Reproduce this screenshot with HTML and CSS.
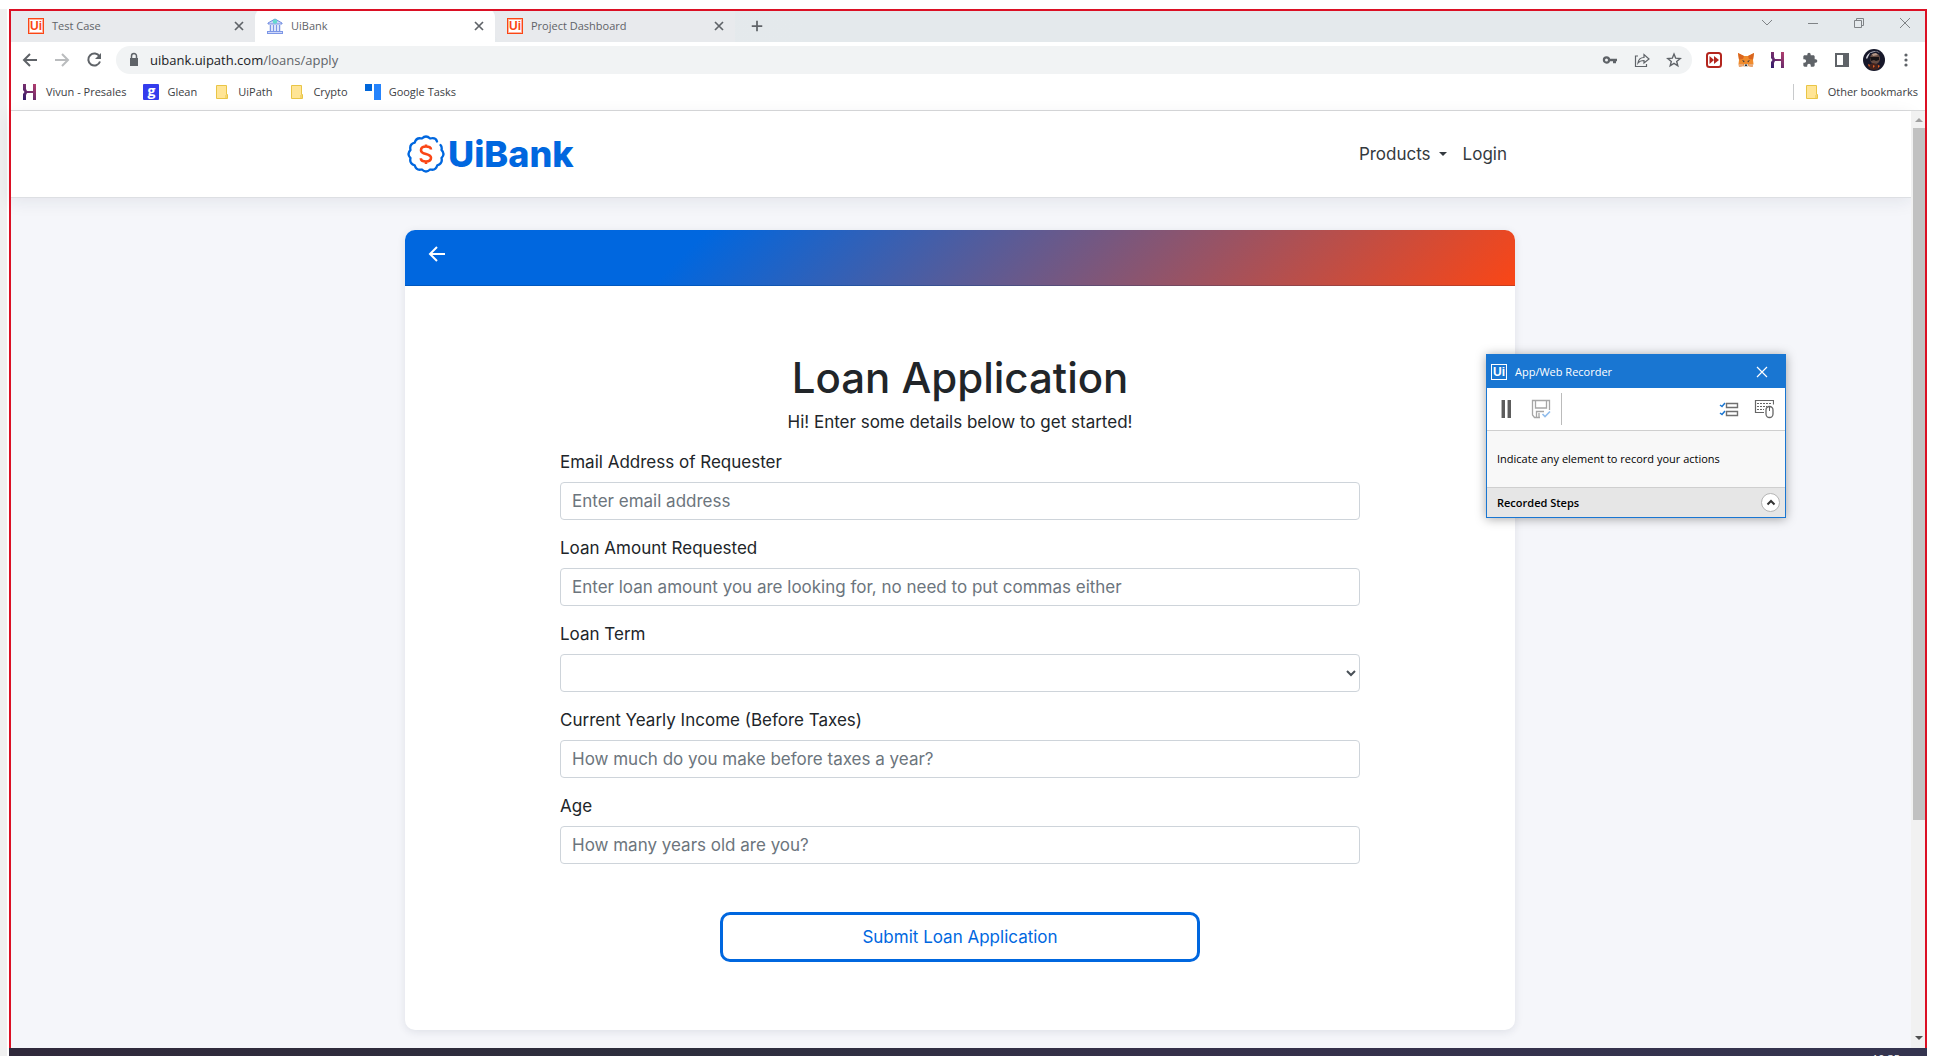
FILE: index.html
```html
<!DOCTYPE html>
<html lang="en">
<head>
<meta charset="utf-8">
<title>UiBank</title>
<link rel="stylesheet" href="styles.css">
</head>
<body>
<svg class="defs" aria-hidden="true">
  <defs>
    <linearGradient id="vivun" x1="0" y1="1" x2="1" y2="0"><stop offset="0" stop-color="#2b1a6b"/><stop offset="1" stop-color="#b8406e"/></linearGradient>
    <symbol id="i-vivun" viewBox="0 0 16 16"><path fill="url(#vivun)" d="M1 0h3v5l1 2h6V0h3v16h-3V9H5l-1 2v5H1v-6l1.500-2L1 6z"/></symbol>
    <symbol id="i-close" viewBox="0 0 16 16"><path d="M4 4l8 8M12 4l-8 8" fill="none" stroke="#5f6368" stroke-width="1.700"/></symbol>
    <symbol id="i-folder" viewBox="0 0 16 16"><path d="M2.500 1.500h10v9h1v4h-11z" fill="#ffe596" stroke="#e9c546"/><path d="M12 11v3" stroke="#e9c546" fill="none"/></symbol>
  </defs>
</svg>
<div class="window">
  <header class="chrome">
    <div class="tabs">
      <div class="tab"><span class="ui-badge">Ui</span><span class="tab-title">Test Case</span><button class="icon-btn" aria-label="Close tab"><svg><use href="#i-close"/></svg></button></div>
      <div class="tab tab-active">
        <svg viewBox="0 0 16 16"><path d="M8 1l7 4v1H1V5z" fill="#cfd8fa" stroke="#6f8be0"/><path d="M3.500 7v6M6.500 7v6M9.500 7v6M12.500 7v6" stroke="#7d97e6" stroke-width="1.500"/><path d="M0 13h16v3H0z" fill="#7d97e6"/><path d="M1 14.500h14" stroke="#cfd8fa"/><circle cx="8" cy="3.500" r="2.300" fill="#66d9cf"/></svg>
        <span class="tab-title">UiBank</span><button class="icon-btn" aria-label="Close tab"><svg><use href="#i-close"/></svg></button></div>
      <div class="tab tab-last"><span class="ui-badge">Ui</span><span class="tab-title">Project Dashboard</span><button class="icon-btn" aria-label="Close tab"><svg><use href="#i-close"/></svg></button></div>
      <button class="icon-btn new-tab" aria-label="New tab"><svg viewBox="0 0 16 16"><path d="M8 2v12M2 8h12" stroke="#5f6368" stroke-width="2"/></svg></button>
      <div class="window-buttons">
        <button class="icon-btn" aria-label="Search tabs"><svg viewBox="0 0 16 16"><path d="M3 5l5 5 5-5"/></svg></button>
        <button class="icon-btn" aria-label="Minimize"><svg viewBox="0 0 16 16"><path d="M3 8.500h10"/></svg></button>
        <button class="icon-btn" aria-label="Restore"><svg viewBox="0 0 16 16"><path d="M3.500 5.500h7v7h-7zM5.500 5.500v-2h7v7h-2"/></svg></button>
        <button class="icon-btn" aria-label="Close"><svg viewBox="0 0 16 16"><path d="M3 3l10 10M13 3L3 13"/></svg></button>
      </div>
    </div>
    <div class="toolbar">
      <div class="history">
        <button class="icon-btn" aria-label="Back"><svg viewBox="0 0 16 16"><path d="M15 8H2M8 2L2 8l6 6"/></svg></button>
        <button class="icon-btn disabled" aria-label="Forward"><svg viewBox="0 0 16 16"><path d="M1 8h13M8 2l6 6-6 6"/></svg></button>
        <button class="icon-btn" aria-label="Reload"><svg viewBox="0 0 16 16"><path d="M13.500 4.500A6 6 0 1 0 14 9.500"/><path d="M15 1v6H9z" fill="#5f6368" stroke="none"/></svg></button>
      </div>
      <div class="address">
        <svg class="lock" viewBox="0 0 16 16"><path d="M4 6h8v8H4z" fill="#5f6368"/><path d="M5.500 6V4a2.500 2.500 0 0 1 5 0v2" fill="none" stroke="#5f6368" stroke-width="1.500"/></svg>
        <span class="url"><span class="host">uibank.uipath.com</span>/loans/apply</span>
        <button class="icon-btn" aria-label="Passwords"><svg viewBox="0 0 16 16"><circle cx="4.500" cy="8" r="2.600" fill="none" stroke="#5f6368" stroke-width="2.200"/><path d="M8 6.800h7v2.400h-1v2h-3v-2H8z" fill="#5f6368"/></svg></button>
        <button class="icon-btn" aria-label="Share"><svg viewBox="0 0 16 16"><path d="M4 4H1.500v10.500h11V12M4 11c.5-4 3-5.500 6-5.500V2.500L15 7l-5 4V8.500C7.500 8.500 5.500 9 4 11z" fill="none" stroke="#5f6368" stroke-width="1.200"/></svg></button>
        <button class="icon-btn" aria-label="Bookmark"><svg viewBox="0 0 16 16"><path d="M8 2l1.700 4.200 4.500.3-3.500 2.900 1.100 4.400L8 11.400l-3.800 2.400 1.100-4.400-3.500-2.900 4.500-.3z" fill="none" stroke="#5f6368" stroke-width="1.400"/></svg></button>
      </div>
      <div class="extensions">
        <button class="icon-btn" aria-label="Recorder extension"><svg viewBox="0 0 16 16"><rect x="1" y="1" width="14" height="14" rx="2.500" fill="#fff" stroke="#b3261e" stroke-width="2"/><path d="M3.500 4l4.500 4-4.500 4zM8 4l5 4-5 4z" fill="#b3261e"/></svg></button>
        <button class="icon-btn" aria-label="MetaMask"><svg viewBox="0 0 16 16"><path d="M0 1l6 3h4l6-3-1 7 .5 4-1.500 3-4-1-2 1H7l-2-1-4 1-.5-3L1 8z" fill="#f08b2c"/><path d="M0 1l6 3-1 3-4 .500zM16 1l-6 3 1 3 4 .500z" fill="#d9651f"/><path d="M1 12h4l1 2-5 1zM15 12h-4l-1 2 5 1z" fill="#e8a878"/><path d="M6 12h4v3H6z" fill="#d8d0c8"/><path d="M4 8l2.500 1L6 10.500zM12 8L9.500 9l.5 1.500zM7 12.500h2v1.500H7z" fill="#2b3440"/></svg></button>
        <button class="icon-btn" aria-label="Vivun"><svg><use href="#i-vivun"/></svg></button>
        <button class="icon-btn" aria-label="Extensions"><svg viewBox="0 0 24 24"><path fill="#5f6368" d="M20.500 11H19V7c0-1.100-.9-2-2-2h-4V3.500a2.500 2.500 0 0 0-5 0V5H4c-1.100 0-2 .9-2 2v3.800h1.500a2.700 2.700 0 0 1 0 5.400H2V20c0 1.100.9 2 2 2h3.800v-1.500a2.700 2.700 0 0 1 5.400 0V22H17c1.100 0 2-.9 2-2v-4h1.500a2.500 2.500 0 0 0 0-5z"/></svg></button>
        <button class="icon-btn" aria-label="Side panel"><svg viewBox="0 0 16 16"><path d="M1 1h14v14H1zM3 3v10h6V3z" fill="#5f6368" fill-rule="evenodd"/></svg></button>
        <button class="icon-btn avatar" aria-label="Profile"><svg viewBox="0 0 22 22"><circle cx="11" cy="11" r="11" fill="#17182a"/><path d="M3 9a9 9 0 0 1 14-5l-4-1.500L7 4 4 10z" fill="#d8d8e0"/><ellipse cx="12" cy="9.500" rx="5" ry="5.500" fill="#654b42"/><path d="M7 8h9v3l-3 1-2-1-3 1z" fill="#161214"/><path d="M9 5l4-1 2 2-5 1z" fill="#b59a8a"/><path d="M5 16l5-2 7 2-2 4-4 1-4-1z" fill="#44231d"/><path d="M5 15l2 1-1 2zM10 16l2 1-2 2zM15 16l2 1-2 2z" fill="#df5f27"/></svg></button>
        <button class="icon-btn" aria-label="Menu"><svg viewBox="0 0 16 16"><circle cx="8" cy="3" r="1.600" fill="#5f6368"/><circle cx="8" cy="8" r="1.600" fill="#5f6368"/><circle cx="8" cy="13" r="1.600" fill="#5f6368"/></svg></button>
      </div>
    </div>
    <nav class="bookmarks">
      <a href="#"><svg><use href="#i-vivun"/></svg>Vivun - Presales</a>
      <a href="#"><span class="glean">g</span>Glean</a>
      <a href="#"><svg><use href="#i-folder"/></svg>UiPath</a>
      <a href="#"><svg><use href="#i-folder"/></svg>Crypto</a>
      <a href="#"><svg viewBox="0 0 16 16"><path d="M0 0h7v7H0z" fill="#0066da"/><path d="M9 0h7v16H9z" fill="#2684fc"/></svg>Google Tasks</a>
      <a class="other" href="#"><svg><use href="#i-folder"/></svg>Other bookmarks</a>
    </nav>
  </header>

  <div class="viewport">
    <div class="page">
      <header class="site-header">
        <div class="container header-row">
          <a class="logo" href="#" aria-label="UiBank">
            <svg viewBox="0 0 38 38"><path d="M30 6.500Q28.800 2.100 23.100 3.500 19-.5 14.900 3.500 9.200 2.100 7.700 7.700 2.100 9.200 3.500 14.900-.5 19 3.500 23.100 2.100 28.800 7.700 30.300 9.200 35.900 14.900 34.500 19 38.500 23.100 34.500 28.800 35.900 30.300 30.300 35.900 28.800 34.500 23.100 38.500 19 34.500 14.900 35.300 12 33.500 10" fill="none" stroke="#0067df" stroke-width="2.300" stroke-linecap="round" stroke-linejoin="round"/><path d="M24 14.500c0-2-2-3-5-3s-5 1.200-5 3.700c0 5 10 2.600 10 7.600 0 2.400-2 3.700-5 3.700s-5.200-1-5.200-3.200M19 9.500v3M19 26v3" fill="none" stroke="#fa4616" stroke-width="2.600"/></svg>
            <span>UiBank</span>
          </a>
          <nav class="site-nav"><button class="products">Products</button><a href="#">Login</a></nav>
        </div>
      </header>
      <main class="container">
        <section class="card">
          <div class="card-top"><a href="#" aria-label="Back"><svg viewBox="0 0 18 18"><path d="M17 9H2M9 2L2 9l7 7" fill="none" stroke="#fff" stroke-width="2"/></svg></a></div>
          <form class="form">
            <h1>Loan Application</h1>
            <p>Hi! Enter some details below to get started!</p>
            <div class="field"><label for="email">Email Address of Requester</label><input id="email" type="email" placeholder="Enter email address"></div>
            <div class="field"><label for="amount">Loan Amount Requested</label><input id="amount" type="text" placeholder="Enter loan amount you are looking for, no need to put commas either"></div>
            <div class="field"><label for="term">Loan Term</label><select id="term"><option></option></select></div>
            <div class="field"><label for="income">Current Yearly Income (Before Taxes)</label><input id="income" type="text" placeholder="How much do you make before taxes a year?"></div>
            <div class="field"><label for="age">Age</label><input id="age" type="text" placeholder="How many years old are you?"></div>
            <button class="submit" type="button">Submit Loan Application</button>
          </form>
        </section>
      </main>
    </div>
    <div class="scrollbar" aria-hidden="true"><i class="up"></i><i class="thumb"></i><i class="down"></i></div>
  </div>
</div>
<footer class="taskbar"><span>10:35</span></footer>

<aside class="recorder">
  <div class="rec-title"><span class="ui-badge">Ui</span><span>App/Web Recorder</span><button class="icon-btn" aria-label="Close recorder"><svg viewBox="0 0 16 16"><path d="M3 3l10 10M13 3L3 13" stroke="#fff" stroke-width="1.200"/></svg></button></div>
  <div class="rec-tools">
    <button class="icon-btn" aria-label="Pause"><svg viewBox="0 0 20 20"><path d="M5 1h4v18H5zM11 1h4v18h-4z" fill="#b5b5b5"/><path d="M6 1h3v18H6zM12 1h3v18h-3z" fill="#5c5c5c"/></svg></button>
    <button class="icon-btn" aria-label="Save"><svg viewBox="0 0 20 20" fill="none"><path d="M18.500 11V1.500h-17V16l2 2.500H9M4.500 2v7h11V2M5.500 18v-5.500H13M8 14v4" stroke="#a6a6a6" stroke-width="1.300"/><path d="M11.500 15l2.500 2.500 5-5" stroke="#91bdec" stroke-width="1.600"/></svg></button>
    <i class="divider"></i>
    <button class="icon-btn push" aria-label="Steps"><svg viewBox="0 0 20 20" fill="none"><path d="M7.500 4.500h11v4h-11zM7.500 12.500h11v4h-11z" stroke="#707070" stroke-width="1.400"/><path d="M1 6l2 1.500L6 4M1 14l2 1.500L6 12" stroke="#1976d2" stroke-width="1.500"/></svg></button>
    <button class="icon-btn" aria-label="Input settings"><svg viewBox="0 0 20 20" fill="none"><path d="M10 13.500H1.500v-12h18v4" stroke="#666" stroke-width="1.200"/><path d="M3 4.500h14M3 7.500h10M3 10.500h7" stroke="#666" stroke-dasharray="2 1"/><rect x="12" y="7.500" width="7" height="11" rx="3.500" fill="#fff" stroke="#666" stroke-width="1.300"/><path d="M15.500 8v4" stroke="#666"/></svg></button>
  </div>
  <div class="rec-hint">Indicate any element to record your actions</div>
  <div class="rec-steps"><span>Recorded Steps</span><button class="expand" aria-label="Expand"><svg viewBox="0 0 16 16"><path d="M4.500 9.500L8 6l3.500 3.500" fill="none" stroke="#333" stroke-width="2"/></svg></button></div>
</aside>
</body>
</html>
```
FILE: styles.css
```css
* { box-sizing: border-box; }
body {
  margin: 0;
  min-height: 100vh;
  padding: 9px 9px 0;
  display: flex;
  flex-direction: column;
  background: linear-gradient(#f0f0f0, #f0f0f0) 0 9px / 7px 100% no-repeat #fff;
  font-family: Inter, sans-serif;
  color: #212529;
  overflow: hidden;
}
a { color: inherit; text-decoration: none; }
svg { width: 16px; height: 16px; flex: none; display: block; }
.defs { position: absolute; width: 0; height: 0; }
.icon-btn { border: 0; padding: 0; background: none; display: flex; flex: none; align-items: center; justify-content: center; }

.window { position: relative; flex: 1; display: flex; flex-direction: column; }
.window::after { content: ""; position: absolute; inset: 0; border: 2px solid #db1024; border-bottom: 0; pointer-events: none; }

/* Browser frame */
.chrome { font-family: "Open Sans", "Noto Sans", sans-serif; font-size: 11px; border-bottom: 1px solid #d9dadb; background: #fff; }
.tabs { display: flex; height: 33px; background: linear-gradient(90deg, #e8eaed, #e4e9ec 800px); }
.tab { display: flex; align-items: center; gap: 8px; width: 240px; padding: 0 8px 0 12px; color: #5f6368; background: #e8eaed; }
.tab:first-child { width: 246px; padding-left: 19px; border-radius: 0 0 8px 0; }
.tab-active { background: #fff; border-radius: 8px 8px 0 0; }
.tab-last { border-radius: 0 0 0 8px; }
.tab-title { flex: 1; }
.ui-badge { width: 16px; height: 16px; flex: none; display: flex; align-items: center; justify-content: center; border: 1px solid #fa4616; outline: 1px solid #ffb09a; outline-offset: -2px; color: #fa4616; font: 700 12px/14px "Liberation Sans", sans-serif; background: #fff; }
.new-tab { width: 44px; }
.new-tab svg { width: 14px; height: 14px; }
.window-buttons { margin-left: auto; display: flex; gap: 30px; padding: 0 14px 6px 0; }
.window-buttons svg { fill: none; stroke: #7f8386; stroke-width: 1; }
.toolbar { display: flex; align-items: center; height: 36px; padding: 0 13px; gap: 14px; }
.history { display: flex; gap: 16px; }
.history svg { fill: none; stroke: #5f6368; stroke-width: 2; }
.history .disabled svg { stroke: #babcbe; }
.address { flex: 1; display: flex; align-items: center; gap: 16px; height: 28px; padding: 0 10px; border-radius: 14px; background: #f1f3f4; }
.url { flex: 1; font-size: 13px; color: #5f6368; }
.host { color: #202124; }
.lock { margin-right: -8px; }
.extensions { display: flex; align-items: center; gap: 16px; }
.avatar { margin: 0 -3px; }
.avatar svg { width: 22px; height: 22px; }
.bookmarks { display: flex; align-items: center; gap: 17px; height: 31px; padding: 0 9px 4px 13px; color: #3c4043; margin-bottom: 1px; }
.bookmarks a { display: flex; align-items: center; gap: 8px; }
.bookmarks .other { margin-left: auto; padding-left: 10px; border-left: 1px solid #c8cacc; }
.glean { width: 16px; height: 16px; border-radius: 1px; background: #343ced; color: #fff; font-weight: 700; font-size: 14px; line-height: 13px; text-align: center; }

/* Banking site */
.viewport { flex: 1; display: flex; background: #f5f6fa; }
.page { flex: 1; font-size: 17px; line-height: 24px; }
.container { width: 1110px; max-width: 100%; margin: 0 auto; }
.site-header { background: #fff; border-bottom: 1px solid #dddfe3; box-shadow: 0 4px 16px rgba(30, 40, 70, .08); }
.header-row { display: flex; align-items: center; justify-content: space-between; height: 86px; padding-right: 8px; }
.logo { display: flex; align-items: center; gap: 3px; padding-left: 2px; color: #0067df; font-size: 36px; font-weight: 800; }
.logo svg { width: 38px; height: 38px; }
.site-nav { display: flex; gap: 16px; color: #343a40; }
.products { display: flex; align-items: center; gap: 8px; padding: 0; border: 0; background: none; color: inherit; font: inherit; }
.products::after { content: ""; border: 4px solid transparent; border-top-color: currentColor; border-bottom: 0; }
.card { margin-top: 32px; border-radius: 10px; background: #fff; box-shadow: 0 2px 8px rgba(30, 40, 70, .1); overflow: hidden; }
.card-top { height: 56px; padding: 15px 23px; background: linear-gradient(135deg, #0067df 26%, #fa4616 100%); border-bottom: 1px solid rgba(0, 0, 0, .14); }
.card-top svg { width: 18px; height: 18px; }
.form { display: flex; flex-direction: column; max-width: 800px; margin: 0 auto; padding: 68px 0; }
.form h1 { margin: 0 0 8px; font-size: 42px; line-height: 48px; font-weight: 500; text-align: center; }
.form p { margin: 0 0 16px; text-align: center; }
.field { display: flex; flex-direction: column; gap: 8px; margin-bottom: 16px; }
.field input, .field select { height: 38px; width: 100%; padding: 0 11px; border: 1px solid #ced4da; border-radius: 4px; background: #fff; color: #495057; font: inherit; }
.field select { padding: 0 4px; }
.field input::placeholder { color: #6c757d; opacity: 1; }
.submit { align-self: center; width: 480px; height: 50px; margin-top: 32px; border: 3px solid #0067df; border-radius: 10px; background: #fff; color: #0067df; font: inherit; }

.scrollbar { width: 16px; display: flex; flex-direction: column; align-items: center; padding: 7px 0 8px; background: #f1f1f1; }
.up, .down { border: 4px solid transparent; }
.up { border-top: 0; border-bottom-color: #a0a0a0; margin-bottom: 6px; }
.thumb { width: 12px; flex: 0 0 75%; background: #c1c1c1; }
.down { margin-top: auto; border-bottom: 0; border-top-color: #505050; }
.taskbar { height: 8px; display: flex; justify-content: flex-end; padding: 4px 27px 0 0; background: linear-gradient(90deg, #30293b, #2d2e3d 35%, #35304a 60%, #34344f); color: #fff; font: 11px/14px "Open Sans", sans-serif; overflow: hidden; }

/* Floating recorder window */
.recorder { position: absolute; left: 1486px; top: 354px; width: 300px; border: 1px solid #1976d2; background: #fff; color: #000; box-shadow: 0 1px 10px rgba(0, 0, 0, .35); font: 11px/16px "Open Sans", "Noto Sans", sans-serif; }
.rec-title { display: flex; align-items: center; gap: 8px; height: 33px; padding: 0 15px 0 4px; background: #1976d2; color: #fff; }
.rec-title .icon-btn { margin-left: auto; }
.rec-title .ui-badge { border-color: #fff; outline: 0; background: none; color: #fff; }
.rec-tools { display: flex; align-items: center; gap: 15px; height: 43px; padding: 0 11px 0 9px; border-bottom: 1px solid #cfcfcf; }
.rec-tools svg { width: 20px; height: 20px; }
.divider { width: 1px; height: 32px; margin-left: -5px; background: #bbb; }
.push { margin-left: auto; }
.rec-hint { padding: 20px 10px; background: #f8f8f8; border-bottom: 1px solid #cfcfcf; }
.rec-steps { display: flex; align-items: center; justify-content: space-between; height: 29px; padding: 0 5px 0 10px; background: #e6e6e6; font-weight: 600; }
.expand { width: 19px; height: 19px; padding: 0; border: 1px solid #b5b5b5; border-radius: 50%; background: #fff; display: flex; align-items: center; justify-content: center; }
```
